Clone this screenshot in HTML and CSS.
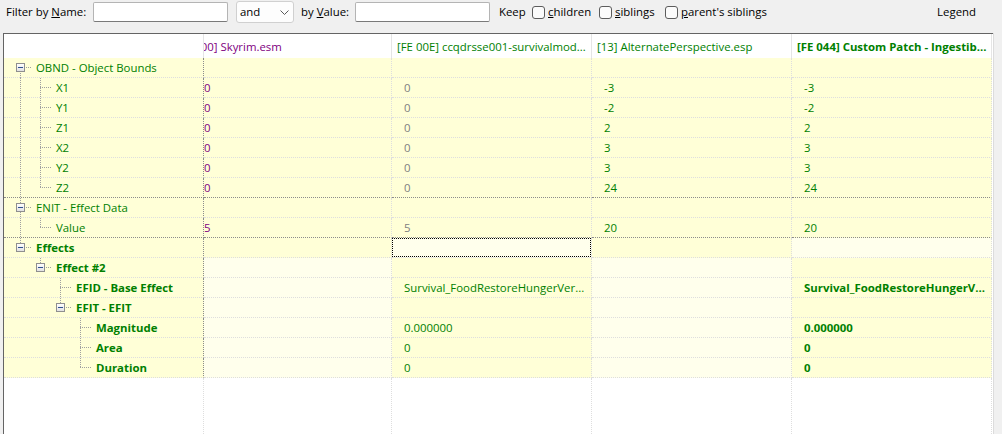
FILE: index.html
```html
<!DOCTYPE html>
<html lang="en">
<head>
  <meta charset="utf-8"/>
  <title>Record View</title>
  <link rel="stylesheet" href="styles.css">
</head>
<body>
  <div class="toolbar">
    <label class="lbl lbl-name">Filter by <u>N</u>ame:</label>
    <input class="edit" type="text">
    <div class="combo">
      <span>and</span>
      <svg width="9" height="5" viewBox="0 0 9 5"><polyline points="0.5,0.5 4.5,4.5 8.5,0.5" fill="none" stroke="#5a5a5a" stroke-width="1"/></svg>
    </div>
    <label class="lbl lbl-value">by <u>V</u>alue:</label>
    <input class="edit" type="text">
    <span class="lbl lbl-keep">Keep</span>
    <label class="check check-children"><span class="tick"></span><u>c</u>hildren</label>
    <label class="check check-siblings"><span class="tick"></span><u>s</u>iblings</label>
    <label class="check"><span class="tick"></span><u>p</u>arent's siblings</label>
    <span class="legend">Legend</span>
  </div>

  <div class="grid-area">
    <div class="grid">
      <div class="head">
        <div class="hc tree"></div>
        <div class="hc c2 purple"><span class="scrolled">[00] Skyrim.esm</span></div>
        <div class="hc green">[FE 00E] ccqdrsse001-survivalmod...</div>
        <div class="hc green">[13] AlternatePerspective.esp</div>
        <div class="hc green bold">[FE 044] Custom Patch - Ingestib...</div>
      </div>

      <div class="row">
        <div class="cell tree"><i class="n first"><b class="box"></b></i><span>OBND - Object Bounds</span></div>
        <div class="cell c2"></div><div class="cell"></div><div class="cell"></div><div class="cell"></div>
      </div>
      <div class="row">
        <div class="cell tree"><i class="g pipe"></i><i class="n tee"></i><span>X1</span></div>
        <div class="cell c2 purple">0</div><div class="cell grey">0</div><div class="cell green">-3</div><div class="cell green">-3</div>
      </div>
      <div class="row">
        <div class="cell tree"><i class="g pipe"></i><i class="n tee"></i><span>Y1</span></div>
        <div class="cell c2 purple">0</div><div class="cell grey">0</div><div class="cell green">-2</div><div class="cell green">-2</div>
      </div>
      <div class="row">
        <div class="cell tree"><i class="g pipe"></i><i class="n tee"></i><span>Z1</span></div>
        <div class="cell c2 purple">0</div><div class="cell grey">0</div><div class="cell green">2</div><div class="cell green">2</div>
      </div>
      <div class="row">
        <div class="cell tree"><i class="g pipe"></i><i class="n tee"></i><span>X2</span></div>
        <div class="cell c2 purple">0</div><div class="cell grey">0</div><div class="cell green">3</div><div class="cell green">3</div>
      </div>
      <div class="row">
        <div class="cell tree"><i class="g pipe"></i><i class="n tee"></i><span>Y2</span></div>
        <div class="cell c2 purple">0</div><div class="cell grey">0</div><div class="cell green">3</div><div class="cell green">3</div>
      </div>
      <div class="row end">
        <div class="cell tree"><i class="g pipe"></i><i class="n corner"></i><span>Z2</span></div>
        <div class="cell c2 purple">0</div><div class="cell grey">0</div><div class="cell green">24</div><div class="cell green">24</div>
      </div>

      <div class="row">
        <div class="cell tree"><i class="n tee"><b class="box"></b></i><span>ENIT - Effect Data</span></div>
        <div class="cell c2"></div><div class="cell"></div><div class="cell"></div><div class="cell"></div>
      </div>
      <div class="row end">
        <div class="cell tree"><i class="g pipe"></i><i class="n corner"></i><span>Value</span></div>
        <div class="cell c2 purple">5</div><div class="cell grey">5</div><div class="cell green">20</div><div class="cell green">20</div>
      </div>

      <div class="row">
        <div class="cell tree bold"><i class="n corner"><b class="box"></b></i><span>Effects</span></div>
        <div class="cell c2"></div><div class="cell lt focus"></div><div class="cell"></div><div class="cell lt"></div>
      </div>
      <div class="row">
        <div class="cell tree bold"><i class="g"></i><i class="n corner"><b class="box"></b></i><span>Effect #2</span></div>
        <div class="cell c2 lt"></div><div class="cell"></div><div class="cell lt"></div><div class="cell"></div>
      </div>
      <div class="row">
        <div class="cell tree bold"><i class="g"></i><i class="g"></i><i class="n tee"></i><span>EFID - Base Effect</span></div>
        <div class="cell c2 lt"></div><div class="cell green">Survival_FoodRestoreHungerVer...</div><div class="cell lt"></div><div class="cell green bold">Survival_FoodRestoreHungerV...</div>
      </div>
      <div class="row">
        <div class="cell tree bold"><i class="g"></i><i class="g"></i><i class="n corner"><b class="box"></b></i><span>EFIT - EFIT</span></div>
        <div class="cell c2 lt"></div><div class="cell"></div><div class="cell lt"></div><div class="cell"></div>
      </div>
      <div class="row">
        <div class="cell tree bold"><i class="g"></i><i class="g"></i><i class="g"></i><i class="n tee"></i><span>Magnitude</span></div>
        <div class="cell c2 lt"></div><div class="cell green">0.000000</div><div class="cell lt"></div><div class="cell green bold">0.000000</div>
      </div>
      <div class="row">
        <div class="cell tree bold"><i class="g"></i><i class="g"></i><i class="g"></i><i class="n tee"></i><span>Area</span></div>
        <div class="cell c2 lt"></div><div class="cell green">0</div><div class="cell lt"></div><div class="cell green bold">0</div>
      </div>
      <div class="row">
        <div class="cell tree bold"><i class="g"></i><i class="g"></i><i class="g"></i><i class="n corner"></i><span>Duration</span></div>
        <div class="cell c2 lt"></div><div class="cell green">0</div><div class="cell lt"></div><div class="cell green bold">0</div>
      </div>

      <div class="filler">
        <div></div><div></div><div></div><div></div><div></div>
      </div>
    </div>
    <div class="vscroll"></div>
  </div>
</body>
</html>
```

FILE: styles.css
```css
html, body {
  height: 434px;
}

body {
  margin: 0;
  overflow: hidden;
  font-family: "Open Sans", "Noto Sans", sans-serif;
  font-size: 11.4px;
  color: #000;
  background: #f0f0f0;
  display: flex;
  flex-direction: column;
}

u {
  text-decoration-thickness: 1px;
  text-underline-offset: 1px;
}

/* filter bar */
.toolbar {
  height: 33px;
  flex: none;
  display: flex;
  align-items: flex-start;
  padding: 2px 0 0 6px;
  box-sizing: border-box;
  line-height: 20px;
  white-space: nowrap;
}

.lbl {
  flex: none;
}

.lbl-name { width: 87px; }
.lbl-value { width: 54px; margin-left: 7px; }
.lbl-keep { width: 33px; margin-left: 9px; }

.edit {
  width: 135px;
  height: 20px;
  margin: 0;
  padding: 0 3px;
  box-sizing: border-box;
  border: 1px solid #b4b4b4;
  border-bottom-color: #7a7a7a;
  border-radius: 2px;
  background: #fff;
  font: inherit;
}

.combo {
  width: 58px;
  height: 22px;
  margin: -1px 0 0 8px;
  box-sizing: border-box;
  border: 1px solid #d0d0d0;
  border-radius: 3px;
  background: #fdfdfd;
  display: flex;
  align-items: center;
  justify-content: space-between;
  padding: 0 4px 0 3px;
  line-height: 20px;
}

.check {
  display: flex;
  align-items: center;
  flex: none;
  height: 20px;
}

.check-children { width: 67px; }
.check-siblings { width: 66px; }

.tick {
  width: 13px;
  height: 13px;
  flex: none;
  box-sizing: border-box;
  border: 1px solid #5c5c5c;
  border-radius: 3px;
  background: #fbfbfb;
  margin-right: 3px;
}

.legend {
  margin-left: auto;
  margin-right: 26px;
}

/* record grid */
.grid-area {
  flex: 1;
  display: flex;
  min-height: 0;
}

.grid {
  flex: 1;
  margin-left: 3px;
  border-top: 1px solid #646464;
  border-left: 1px solid #646464;
  background: #fff;
  display: flex;
  flex-direction: column;
  overflow: hidden;
}

.vscroll {
  width: 8px;
  flex: none;
  border-left: 1px solid #dcdcdc;
  background: #f0f0f0;
}

.head, .row, .filler {
  display: grid;
  grid-template-columns: 200px 188px 200px 200px 200px;
}

.head {
  height: 24px;
  flex: none;
}

.hc {
  border-right: 1px solid #e5e5e5;
  padding-left: 5px;
  line-height: 26px;
  height: 24px;
  overflow: hidden;
  white-space: nowrap;
}

.hc.c2 {
  padding-left: 0;
}

.scrolled {
  display: block;
  margin-left: -7px;
}

.row {
  height: 20px;
  flex: none;
}

.cell {
  position: relative;
  height: 20px;
  box-sizing: border-box;
  border-right: 1px dotted #dedede;
  border-bottom: 1px dotted #dedede;
  background: #ffffd7;
  padding-left: 12px;
  line-height: 19px;
  white-space: nowrap;
  overflow: hidden;
}

.cell.c2 {
  padding-left: 0;
}

.cell.lt {
  background: #ffffec;
}

.row.end .cell {
  border-bottom-color: #8c8c8c;
}

.focus::after {
  content: "";
  position: absolute;
  left: 0;
  top: 0;
  right: 0;
  bottom: 0;
  border: 1px dotted #000;
}

.filler {
  flex: 1;
}

.filler div {
  border-right: 1px dotted #dedede;
}

/* tree column */
.cell.tree {
  display: flex;
  padding-left: 6px;
  border-right-color: #8c8c8c;
  color: #008000;
  overflow: visible;
}

.cell.tree span {
  margin-left: 4px;
}

.g, .n {
  flex: none;
  position: relative;
  height: 19px;
}

.g { width: 20px; }
.n { width: 22px; }

.g.pipe::before, .n::before {
  content: "";
  position: absolute;
  left: 10px;
  width: 1px;
  background: linear-gradient(#a0a0a0 50%, transparent 50%) 0 0 / 1px 2px repeat-y;
}

.g.pipe::before { top: 0; bottom: -1px; }
.tee::before { top: 0; bottom: -1px; }
.corner::before { top: 0; height: 10px; }
.first::before { top: 9px; bottom: -1px; }

.n::after {
  content: "";
  position: absolute;
  left: 10px;
  right: 0;
  top: 9px;
  height: 1px;
  background: linear-gradient(to right, #a0a0a0 50%, transparent 50%) 0 0 / 2px 1px repeat-x;
}

.box {
  position: absolute;
  left: 6px;
  top: 5px;
  width: 9px;
  height: 9px;
  box-sizing: border-box;
  border: 1px solid #8f8f8f;
  background: linear-gradient(#ffffff, #e2e2e2);
  z-index: 1;
}

.box::before {
  content: "";
  position: absolute;
  left: 1px;
  top: 3px;
  width: 5px;
  height: 1px;
  background: #2f4f90;
}

/* text colours */
.green { color: #008000; }
.purple { color: #800080; }
.grey { color: #808080; }
.bold { font-weight: bold; }
```
